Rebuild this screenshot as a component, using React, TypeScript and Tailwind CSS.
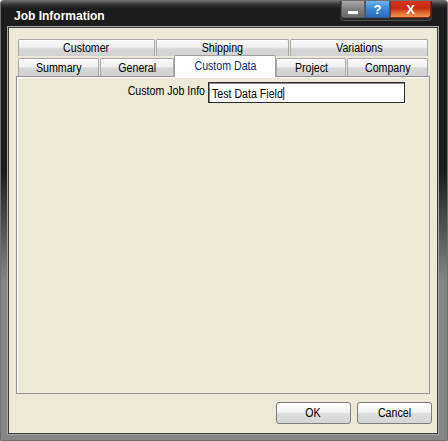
const font = "font-['Liberation_Sans',Arial,sans-serif] font-normal";

const tabBg =
  "bg-[linear-gradient(to_bottom,#fbfbfb_0%,#efefef_45%,#d7d7d7_55%,#d2d2d2_100%)]";

function Txt({ children, origin = "origin-center" }: { children: React.ReactNode; origin?: string }) {
  return <span className={`inline-block whitespace-nowrap scale-x-[0.85] ${origin}`}>{children}</span>;
}

function Tab({ label, w }: { label: string; w: string }) {
  return (
    <div
      className={`${w} h-full flex items-center justify-center border border-[#a7a7a7] border-b-0 rounded-t-[2px] ${tabBg} shadow-[inset_0_1px_0_#ffffff] text-[12.5px] leading-none text-black pt-[1px]`}
    >
      <Txt>{label}</Txt>
    </div>
  );
}

function TitleButtons() {
  return (
    <div className="flex h-[19px] rounded-b-[4px] bg-[#2a2a2a] px-[1px] pb-[2px] shadow-[0_1px_0_#555]">
      <div className="w-[24px] h-full flex items-end justify-center pb-[3px] border border-[#5a5a5a] border-t-0 bg-[linear-gradient(to_bottom,#a8a8a8,#7a7a7a_60%,#6a6a6a)] rounded-bl-[3px]">
        <div className="w-[10px] h-[3px] bg-white shadow-[0_0_0_1px_#777]" />
      </div>
      <div className="w-[25px] h-full flex items-center justify-center border border-[#3a5a8a] border-t-0 bg-[linear-gradient(to_bottom,#6eb4f0,#3a86d6_50%,#2a6cc0)] text-white font-bold text-[13px] leading-none font-['Liberation_Sans',sans-serif]">
        ?
      </div>
      <div className="w-[41px] h-full flex items-center justify-center border border-[#8a2a10] border-t-0 bg-[linear-gradient(to_bottom,#d8361a,#c42a10_45%,#e66a34_75%,#f29a5a)] rounded-br-[3px] text-white font-bold text-[13px] leading-none font-['Liberation_Sans',sans-serif]">
        X
      </div>
    </div>
  );
}

function Button({ label }: { label: string }) {
  return (
    <div
      className={`w-[75px] h-[22px] flex items-center justify-center rounded-[3px] border border-[#7d7d7d] bg-[linear-gradient(to_bottom,#ffffff_0%,#f2f2f2_45%,#dcdcdc_55%,#d6d6d6_100%)] text-[12.5px] leading-none text-black`}
    >
      <Txt>{label}</Txt>
    </div>
  );
}

export default function App() {
  return (
    <div
      className={`w-[448px] h-[441px] flex flex-col border border-[#6e6e6e] rounded-t-[3px] bg-[linear-gradient(to_bottom,#6a6a6a_0px,#3a3a3a_3px,#1c1c1c_7px,#1c1c1c_170px,#858585_280px,#858585_100%)] ${font}`}
    >
      <div className="h-[27px] flex items-start justify-between pl-[13px] pr-[15px]">
        <div className="pt-[9px] text-white font-bold text-[12px] leading-none font-['Liberation_Sans',sans-serif]">
          Job Information
        </div>
        <TitleButtons />
      </div>

      <div className="ml-[8px] mr-[10px] h-[405px] bg-[#ece9d8] flex flex-col px-[7px] pt-[11px] shadow-[0_0_0_1px_#3c3c3c,0_0_0_2px_#a6a6a6]">
        <div className="mx-[2px] flex flex-col">
          <div className="h-[17px] flex gap-[1px]">
            <Tab label="Customer" w="w-[137px]" />
            <Tab label="Shipping" w="w-[134px]" />
            <Tab label="Variations" w="w-[138px]" />
          </div>
          <div className="h-[19px] mt-[1px] flex items-end relative z-10">
            <div className="h-[18px] flex">
              <Tab label="Summary" w="w-[81px]" />
              <div className="w-[1px]" />
              <Tab label="General" w="w-[74px]" />
            </div>
            <div className="w-[103px] h-[22px] -mb-[1px] self-end flex items-start justify-center pt-[4px] bg-white border border-[#a0a0a0] border-b-0 rounded-t-[2px] text-[12.5px] leading-none text-[#0c2a74]">
              <Txt>Custom Data</Txt>
            </div>
            <div className="h-[18px] flex">
              <Tab label="Project" w="w-[70px]" />
              <div className="w-[1px]" />
              <Tab label="Company" w="w-[81px]" />
            </div>
          </div>
        </div>

        <div className="h-[318px] border border-[#929292] bg-[#ece9d8] shadow-[inset_1px_1px_0_#ffffff] flex items-start pt-[5px]">
          <div className="w-[188px] text-right text-[12.5px] leading-none text-black pt-[3px]">
            <Txt origin="origin-right">Custom Job Info</Txt>
          </div>
          <div className="ml-[3px] w-[197px] h-[21px] bg-white border border-[#2e2e2e] shadow-[inset_1px_1px_0_#8a8a8a] flex items-center pl-[3px] text-[12.5px] leading-none text-black pt-[2px]">
            <Txt origin="origin-left">
              Test Data Field
              <span className="inline-block w-[1px] h-[13px] bg-black ml-[1px] align-[-2px]" />
            </Txt>
          </div>
        </div>

        <div className="mt-[8px] flex justify-end gap-[6px] -mr-[2px]">
          <Button label="OK" />
          <Button label="Cancel" />
        </div>
      </div>
    </div>
  );
}
